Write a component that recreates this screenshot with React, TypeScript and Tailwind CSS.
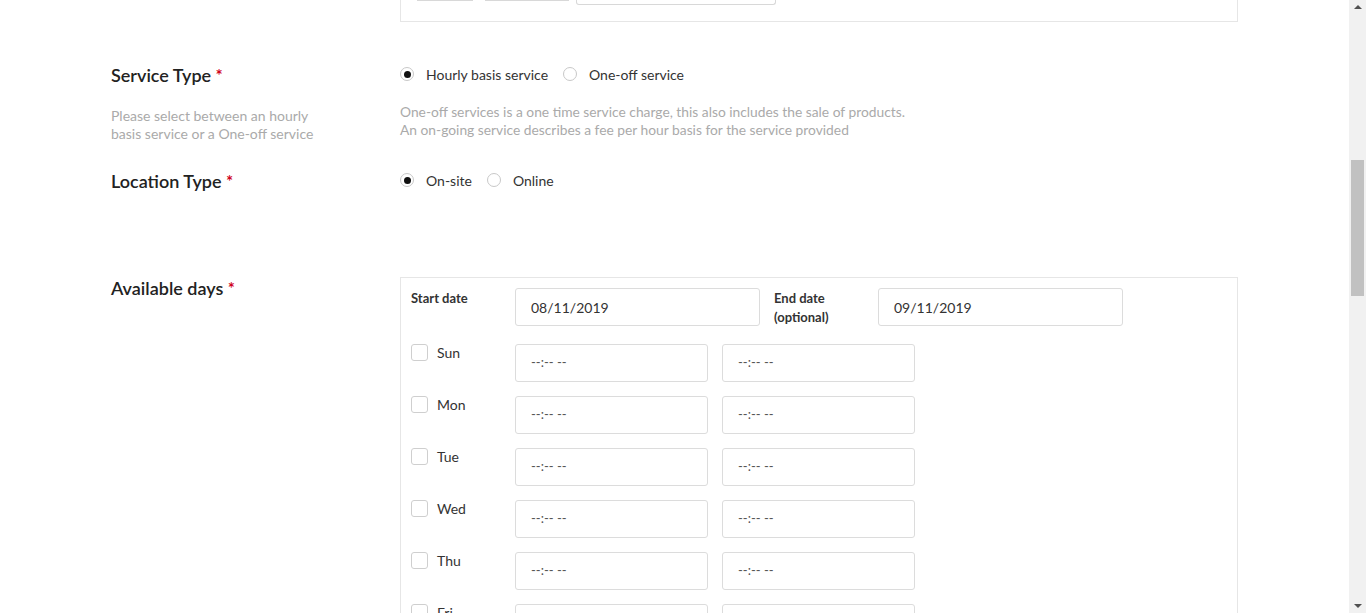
const font = { fontFamily: "Lato, 'Open Sans', sans-serif" };

function Radio({ label, checked }: { label: string; checked?: boolean }) {
  return (
    <label className="flex items-center mr-[15px]">
      <span className="w-[14px] h-[14px] rounded-full border border-[#c8c8c8] bg-white flex items-center justify-center">
        {checked && <span className="w-[7px] h-[7px] rounded-full bg-[#111]" />}
      </span>
      <span className="ml-[12px] text-[14px] text-[#333]">{label}</span>
    </label>
  );
}

function Label({ text }: { text: string }) {
  return (
    <h3 className="text-[18px] leading-6 font-semibold text-[#222]">
      {text} <span className="text-[#d0021b] text-[17px]">*</span>
    </h3>
  );
}

function TimeInput() {
  return (
    <div className="w-[193px] h-[38px] border border-[#dcdcdc] rounded-[3px] flex items-center pl-[15px] text-[13px] text-[#555]">
      --:-- --
    </div>
  );
}

const days = ["Sun", "Mon", "Tue", "Wed", "Thu", "Fri"];

export default function App() {
  return (
    <div className="h-[613px] w-full overflow-hidden flex bg-white" style={font}>
      <div className="flex-1 px-[111px]">
        {/* tail of previous box */}
        <div className="ml-[289px] h-[22px] border-x border-b border-[#e6e6e6] relative">
          <div className="flex items-start gap-[12px] pl-[16px]">
            <div className="w-[56px] h-[1px] border-b border-[#d8d8d8]" />
            <div className="w-[84px] h-[1px] border-b border-[#d8d8d8]" />
            <div className="-ml-[5px] w-[200px] h-[5px] border-x border-b border-[#d8d8d8] rounded-b-[3px]" />
          </div>
        </div>

        {/* Service Type */}
        <div className="flex mt-[41px]">
          <div className="w-[289px] shrink-0">
            <Label text="Service Type" />
            <p className="mt-[19px] text-[14px] leading-[18px] text-[#aaa] w-[220px]">
              Please select between an hourly basis service or a One-off service
            </p>
          </div>
          <div className="flex-1">
            <div className="flex items-center h-[22px]">
              <Radio label="Hourly basis service" checked />
              <Radio label="One-off service" />
            </div>
            <p className="mt-[18px] text-[13.8px] leading-[18px] text-[#aaa]">
              One-off services is a one time service charge, this also includes the sale of products.
              <br />
              An on-going service describes a fee per hour basis for the service provided
            </p>
          </div>
        </div>

        {/* Location Type */}
        <div className="flex mt-[26px] h-[107px]">
          <div className="w-[289px] shrink-0">
            <Label text="Location Type" />
          </div>
          <div className="flex-1">
            <div className="flex items-center h-[22px]">
              <Radio label="On-site" checked />
              <Radio label="Online" />
            </div>
          </div>
        </div>

        {/* Available days */}
        <div className="flex">
          <div className="w-[289px] shrink-0">
            <Label text="Available days" />
          </div>
          <div className="flex-1 mt-[1px] border border-[#e6e6e6] pt-[10px] px-[10px] pb-[20px]">
            <div className="flex items-start">
              <div className="w-[104px] pt-[1px] text-[13px] leading-[19px] font-bold text-[#333]">Start date</div>
              <div className="w-[245px] h-[38px] border border-[#dcdcdc] rounded-[3px] flex items-center pl-[15px] text-[14px] text-[#333]">
                08/11/2019
              </div>
              <div className="ml-[14px] w-[104px] pt-[1px] text-[13px] leading-[19px] font-bold text-[#333]">
                End date
                <br />
                (optional)
              </div>
              <div className="w-[245px] h-[38px] border border-[#dcdcdc] rounded-[3px] flex items-center pl-[15px] text-[14px] text-[#333]">
                09/11/2019
              </div>
            </div>
            <div className="mt-[17px] flex flex-col gap-[14px]">
              {days.map((d) => (
                <div key={d} className="flex items-start">
                  <div className="w-[104px] flex items-start">
                    <span className="w-[17px] h-[17px] border border-[#cfcfcf] rounded-[3px] bg-white" />
                    <span className="ml-[9px] text-[14px] leading-[17px] text-[#333]">{d}</span>
                  </div>
                  <div className="flex gap-[14px]">
                    <TimeInput />
                    <TimeInput />
                  </div>
                </div>
              ))}
            </div>
          </div>
        </div>
      </div>

      {/* fake scrollbar */}
      <div className="w-[17px] shrink-0 h-full bg-[#f1f1f1] flex flex-col items-center">
        <div className="mt-[5px] w-0 h-0 border-x-[4px] border-x-transparent border-b-[4px] border-b-[#505050]" />
        <div className="mt-[151px] w-[13px] h-[136px] bg-[#c1c1c1]" />
        <div className="flex-1" />
        <div className="mb-[5px] w-0 h-0 border-x-[4px] border-x-transparent border-t-[4px] border-t-[#505050]" />
      </div>
    </div>
  );
}
